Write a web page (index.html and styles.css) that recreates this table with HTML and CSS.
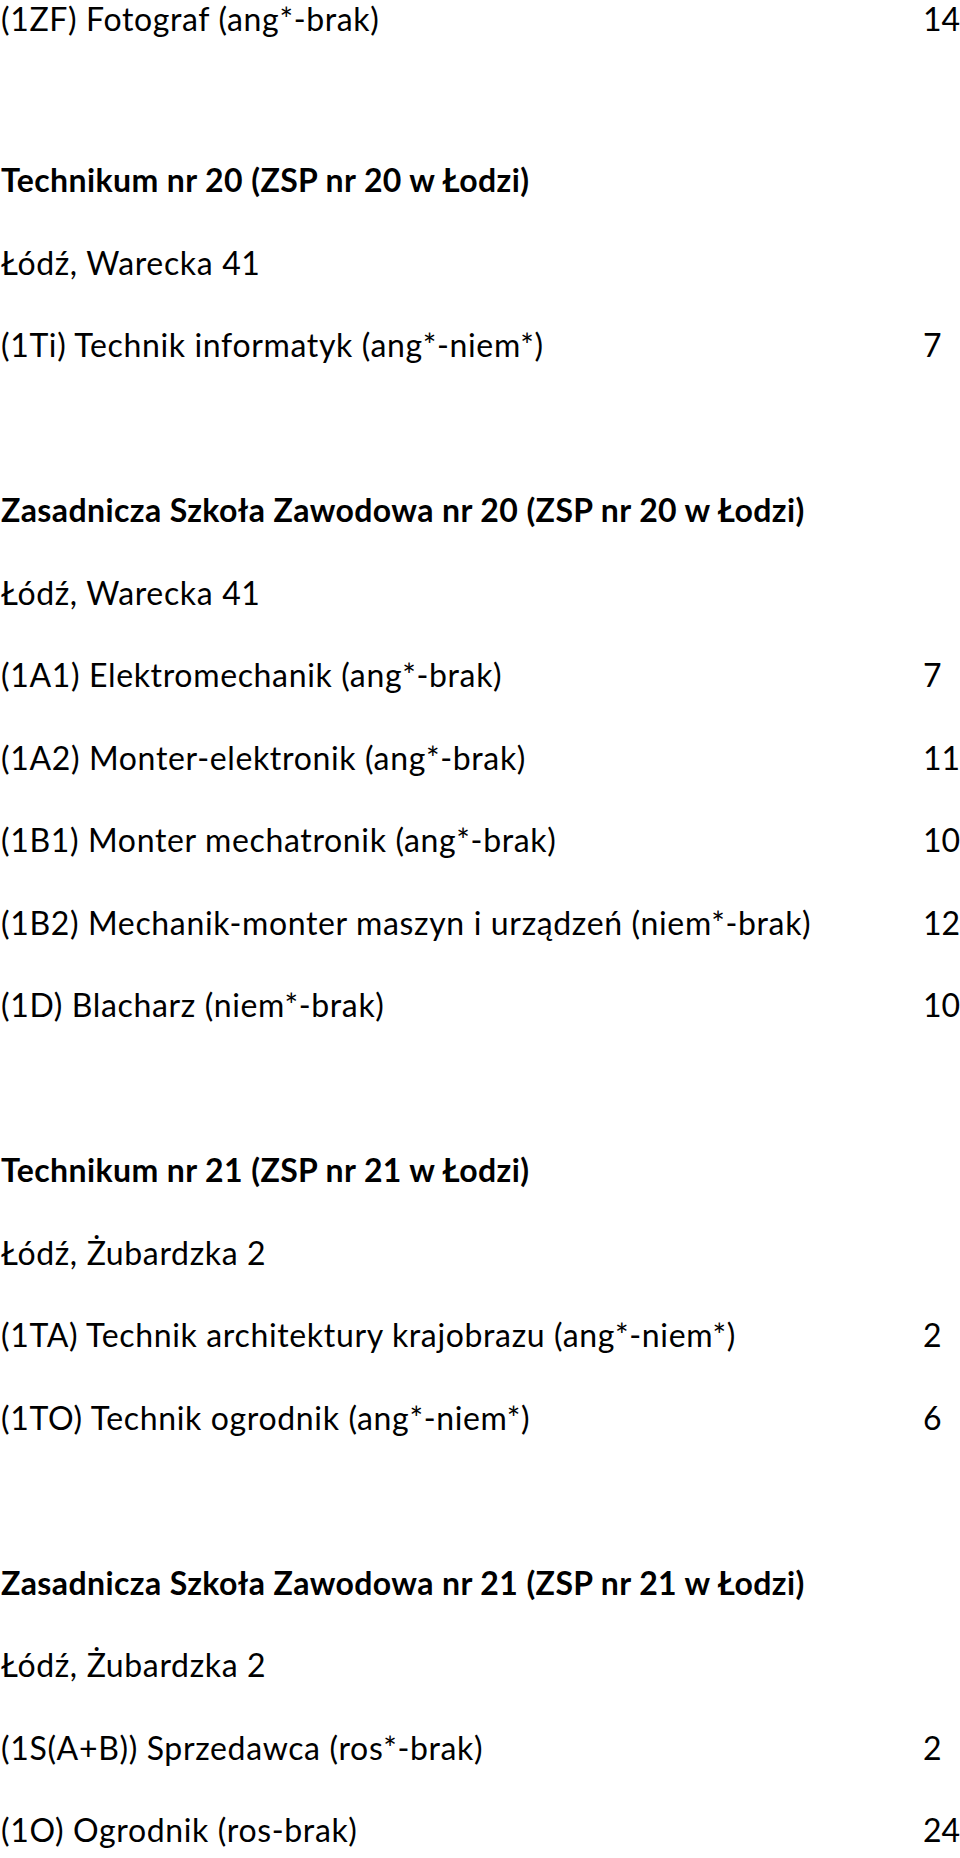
FILE: index.html
```html
<!DOCTYPE html>
<html lang="pl">
<head>
<meta charset="utf-8">
<title>Oferta szkół</title>
<link rel="stylesheet" href="styles.css">
</head>
<body>
<main class="list">
  <section class="school first">
    <div class="row"><span class="label">(1ZF) Fotograf (ang*-brak)</span><span class="num">14</span></div>
  </section>

  <section class="school">
    <h2 class="row title"><span class="label">Technikum nr 20 (ZSP nr 20 w Łodzi)</span></h2>
    <p class="row"><span class="label">Łódź, Warecka 41</span></p>
    <div class="row"><span class="label">(1Ti) Technik informatyk (ang*-niem*)</span><span class="num">7</span></div>
  </section>

  <section class="school">
    <h2 class="row title"><span class="label">Zasadnicza Szkoła Zawodowa nr 20 (ZSP nr 20 w Łodzi)</span></h2>
    <p class="row"><span class="label">Łódź, Warecka 41</span></p>
    <div class="row"><span class="label">(1A1) Elektromechanik (ang*-brak)</span><span class="num">7</span></div>
    <div class="row"><span class="label">(1A2) Monter-elektronik (ang*-brak)</span><span class="num">11</span></div>
    <div class="row"><span class="label">(1B1) Monter mechatronik (ang*-brak)</span><span class="num">10</span></div>
    <div class="row"><span class="label">(1B2) Mechanik-monter maszyn i urządzeń (niem*-brak)</span><span class="num">12</span></div>
    <div class="row"><span class="label">(1D) Blacharz (niem*-brak)</span><span class="num">10</span></div>
  </section>

  <section class="school">
    <h2 class="row title"><span class="label">Technikum nr 21 (ZSP nr 21 w Łodzi)</span></h2>
    <p class="row"><span class="label">Łódź, Żubardzka 2</span></p>
    <div class="row"><span class="label">(1TA) Technik architektury krajobrazu (ang*-niem*)</span><span class="num">2</span></div>
    <div class="row"><span class="label">(1TO) Technik ogrodnik (ang*-niem*)</span><span class="num">6</span></div>
  </section>

  <section class="school">
    <h2 class="row title"><span class="label">Zasadnicza Szkoła Zawodowa nr 21 (ZSP nr 21 w Łodzi)</span></h2>
    <p class="row"><span class="label">Łódź, Żubardzka 2</span></p>
    <div class="row"><span class="label">(1S(A+B)) Sprzedawca (ros*-brak)</span><span class="num">2</span></div>
    <div class="row"><span class="label">(1O) Ogrodnik (ros-brak)</span><span class="num">24</span></div>
  </section>
</main>
</body>
</html>
```

FILE: styles.css
```css
html, body {
  margin: 0;
  padding: 0;
  background: #ffffff;
}

body {
  height: 1858px;
  overflow: hidden;
  color: #000000;
  font-family: Lato, "Open Sans", sans-serif;
  font-size: 32px;
}

.list {
  padding-left: 1px;
}

.school + .school {
  margin-top: 82.5px;
}

.first + .school {
  margin-top: 101px;
}

.row {
  display: grid;
  grid-template-columns: 922px auto;
  margin: 0;
  height: 82.5px;
  line-height: 82.5px;
  font-size: 32px;
  font-weight: 400;
  letter-spacing: 0.65px;
  white-space: nowrap;
}

.first .row {
  height: 38.4px;
  line-height: 38.4px;
}

.title {
  font-weight: 700;
  letter-spacing: 0.4px;
}

.label {
  display: block;
}

.num {
  display: block;
  letter-spacing: 0;
}
```
